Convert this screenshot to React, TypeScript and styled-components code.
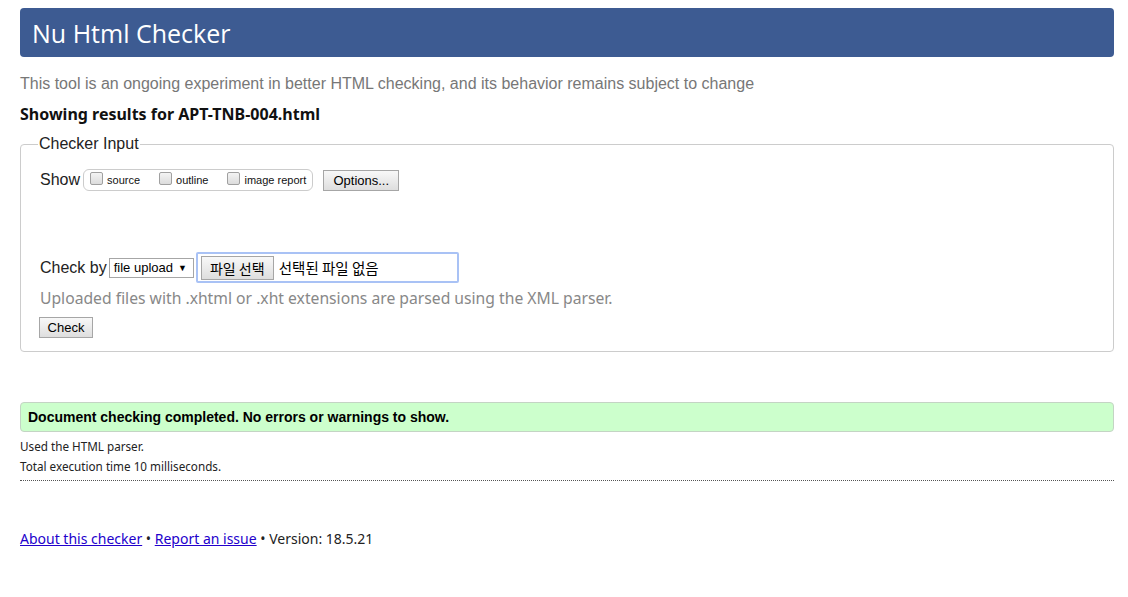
import React from "react";
import styled, { createGlobalStyle } from "styled-components";

const Global = createGlobalStyle`
  html, body { margin: 0; padding: 0; background: #fff; }
  body { font-family: "Liberation Sans", Arial, sans-serif; color: #000; }
`;

const Page = styled.div`
  padding: 8px 14px 0 20px;
`;

const Header = styled.h1`
  margin: 0;
  height: 49px;
  display: flex;
  align-items: center;
  padding: 0 12px;
  background: #3d5b92;
  border-radius: 4px;
  color: #fff;
  font-family: "Open Sans", sans-serif;
  font-weight: 400;
  font-size: 25px;
`;

const Tagline = styled.p`
  margin: 17px 0 0;
  font-size: 16px;
  line-height: 20px;
  color: #777;
`;

const Results = styled.h2`
  margin: 9px 0 0;
  font-family: "Noto Sans", sans-serif;
  font-size: 16px;
  line-height: 22px;
  font-weight: 700;
  color: #111;
`;

const Fieldset = styled.fieldset`
  margin: 10px 0 0;
  padding: 16px 18px 13px;
  border: 1px solid #ccc;
  border-radius: 4px;
`;

const Legend = styled.legend`
  padding: 0 1px;
  font-size: 16px;
  color: #222;
  margin-left: -1px;
`;

const Row = styled.div`
  display: flex;
  align-items: center;
`;

const Label = styled.span`
  font-size: 16px;
  color: #222;
  margin: 0 3px 0 1px;
`;

const ShowGroup = styled.div`
  display: flex;
  align-items: center;
  height: 22px;
  box-sizing: border-box;
  border: 1px solid #ccc;
  border-radius: 6px;
  padding: 0 6px;
`;

const CheckItem = styled.label`
  display: flex;
  align-items: center;
  font-size: 11px;
  color: #111;
  margin-right: 19px;
  &:last-child { margin-right: 0; }
`;

const Box = styled.span`
  display: inline-block;
  width: 11px;
  height: 11px;
  border: 1px solid #a0a0a0;
  border-radius: 2px;
  background: linear-gradient(#f4f4f4, #dcdcdc);
  margin-right: 4px;
  position: relative;
  top: -2px;
`;

const Button = styled.button`
  font-family: "Liberation Sans", Arial, sans-serif;
  font-size: 13px;
  color: #000;
  height: 21px;
  padding: 0 8px;
  border: 1px solid #a6a6a6;
  border-radius: 0;
  background: linear-gradient(#f8f8f8, #dedede);
  box-sizing: border-box;
`;

const OptionsButton = styled(Button)`
  margin-left: 10px;
  width: 76px;
`;

const Spacer = styled.div`
  height: 61px;
`;

const Select = styled.div`
  display: flex;
  align-items: center;
  height: 20px;
  box-sizing: border-box;
  border: 1px solid #a6a6a6;
  padding: 0 4px;
  font-size: 13px;
  color: #000;
  gap: 5px;
  width: 85px;
  margin-left: -1px;
`;

const Arrow = styled.span`
  font-size: 9px;
`;

const FileBox = styled.div`
  display: flex;
  align-items: center;
  width: 263px;
  height: 31px;
  box-sizing: border-box;
  margin-left: 2px;
  border: 2px solid #a9c2f5;
  border-radius: 2px;
  padding: 0 3px;
  gap: 5px;
`;

const FileButton = styled(Button)`
  height: 24px;
  width: 73px;
  padding: 0;
  font-family: "Noto Sans CJK KR", sans-serif;
  font-size: 14px;
`;

const FileText = styled.span`
  font-family: "Noto Sans CJK KR", sans-serif;
  font-size: 14.5px;
  color: #000;
`;

const Hint = styled.p`
  margin: 2px 0 0 1px;
  font-family: "Noto Sans", sans-serif;
  font-size: 15.7px;
  line-height: 26px;
  color: #888;
`;

const CheckButton = styled(Button)`
  margin: 6px 0 0 0;
  width: 54px;
  padding: 0;
`;

const Success = styled.div`
  margin-top: 50px;
  height: 30px;
  box-sizing: border-box;
  display: flex;
  align-items: center;
  padding: 0 7px;
  background: #ccffcc;
  border: 1px solid #c4d4c4;
  border-radius: 4px;
  font-size: 14px;
  font-weight: 700;
  color: #000;
`;

const Small = styled.p`
  margin: 0;
  font-family: "Noto Sans", sans-serif;
  font-size: 11.7px;
  line-height: 20px;
  color: #222;
`;

const SmallFirst = styled(Small)`
  margin-top: 4px;
`;

const Rule = styled.hr`
  margin: 4px 0 0;
  border: 0;
  border-top: 1px dotted #555;
`;

const Footer = styled.p`
  margin: 48px 0 0;
  font-family: "Noto Sans", sans-serif;
  font-size: 14px;
  color: #222;
  a { color: #2200cc; }
`;

export default function App() {
  return (
    <>
      <Global />
      <Page>
        <Header>Nu Html Checker</Header>
        <Tagline>
          This tool is an ongoing experiment in better HTML checking, and its behavior remains subject to change
        </Tagline>
        <Results>Showing results for APT-TNB-004.html</Results>
        <Fieldset>
          <Legend>Checker Input</Legend>
          <Row>
            <Label>Show</Label>
            <ShowGroup>
              <CheckItem><Box />source</CheckItem>
              <CheckItem><Box />outline</CheckItem>
              <CheckItem><Box />image report</CheckItem>
            </ShowGroup>
            <OptionsButton>Options...</OptionsButton>
          </Row>
          <Spacer />
          <Row>
            <Label>Check by</Label>
            <Select>file upload <Arrow>▼</Arrow></Select>
            <FileBox>
              <FileButton>파일 선택</FileButton>
              <FileText>선택된 파일 없음</FileText>
            </FileBox>
          </Row>
          <Hint>Uploaded files with .xhtml or .xht extensions are parsed using the XML parser.</Hint>
          <CheckButton>Check</CheckButton>
        </Fieldset>
        <Success>Document checking completed. No errors or warnings to show.</Success>
        <SmallFirst>Used the HTML parser.</SmallFirst>
        <Small>Total execution time 10 milliseconds.</Small>
        <Rule />
        <Footer>
          <a href="#">About this checker</a> • <a href="#">Report an issue</a> • Version: 18.5.21
        </Footer>
      </Page>
    </>
  );
}
